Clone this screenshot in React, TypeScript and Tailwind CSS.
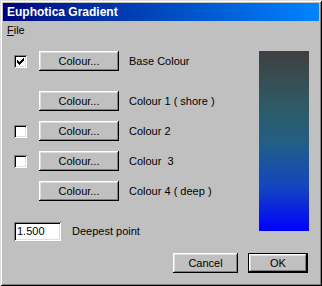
const raised =
  "shadow-[inset_-1px_-1px_#000,inset_1px_1px_#fff,inset_-2px_-2px_#808080,inset_2px_2px_#dfdfdf]";
const sunken =
  "shadow-[inset_1px_1px_#808080,inset_-1px_-1px_#fff,inset_2px_2px_#000,inset_-2px_-2px_#dfdfdf]";

// classic 7x7 check mark, one rect per pixel run
const checkRuns = [
  [6, 0, 1],
  [5, 1, 2],
  [0, 2, 1],
  [4, 2, 3],
  [0, 3, 2],
  [3, 3, 3],
  [0, 4, 5],
  [1, 5, 3],
  [2, 6, 1],
];

function Checkbox({ checked }: { checked?: boolean }) {
  return (
    <div className={`w-[13px] h-[13px] bg-white flex items-center justify-center ${sunken}`}>
      {checked && (
        <svg width="7" height="7" viewBox="0 0 7 7" shapeRendering="crispEdges">
          {checkRuns.map(([x, y, w], i) => (
            <rect key={i} x={x} y={y} width={w} height={1} fill="#000" />
          ))}
        </svg>
      )}
    </div>
  );
}

function Button({ label, w, isDefault }: { label: string; w: string; isDefault?: boolean }) {
  if (isDefault) {
    return (
      <button className={`${w} h-[20px] border border-black bg-[#c0c0c0] p-0`}>
        <div className={`w-full h-full flex items-center justify-center ${raised}`}>{label}</div>
      </button>
    );
  }
  return (
    <button className={`${w} h-[20px] bg-[#c0c0c0] flex items-center justify-center ${raised}`}>
      {label}
    </button>
  );
}

function ColourRow({
  label,
  box,
  checked,
  className = "",
}: {
  label: string;
  box?: boolean;
  checked?: boolean;
  className?: string;
}) {
  return (
    <div className={`flex items-center h-[20px] ${className}`}>
      <div className="w-[13px] mr-[12px]">{box && <Checkbox checked={checked} />}</div>
      <Button label="Colour..." w="w-[80px]" />
      <span className="ml-[10px] whitespace-pre">{label}</span>
    </div>
  );
}

export default function App() {
  return (
    <div
      className={`w-[322px] h-[286px] bg-[#c0c0c0] p-[3px] flex flex-col text-[11px] text-black font-['Liberation_Sans',Arial,sans-serif] shadow-[inset_1px_1px_#dfdfdf,inset_-1px_-1px_#000,inset_2px_2px_#fff,inset_-2px_-2px_#808080]`}
    >
      <div className="h-[18px] bg-linear-to-r from-[#000080] to-[#0084ff] flex items-center pl-[4px] text-white font-bold text-[12px]">
        Euphotica Gradient
      </div>
      <div className="h-[19px] flex items-center pl-[4px]">
        <span>
          <span className="underline underline-offset-1">F</span>ile
        </span>
      </div>

      <div className="flex pt-[11px] pl-[11px] pr-[10px]">
        <div className="flex-1 flex flex-col">
          <ColourRow label="Base Colour" box checked />
          <ColourRow label="Colour 1 ( shore )" className="mt-[20px]" />
          <ColourRow label="Colour 2" box className="mt-[10px]" />
          <ColourRow label="Colour  3" box className="mt-[10px]" />
          <ColourRow label="Colour 4 ( deep )" className="mt-[10px]" />
          <div className="flex items-center mt-[21px] h-[19px]">
            <div className={`w-[47px] h-[19px] bg-white flex items-center pl-[3px] ${sunken}`}>1.500</div>
            <span className="ml-[11px]">Deepest point</span>
          </div>
        </div>
        <div className="w-[50px] h-[180px] bg-[linear-gradient(to_bottom,#404040,#2d5c68_33%,#225e88_52%,#1444c0_76%,#0000ff)]" />
      </div>

      <div className="flex justify-end mt-[12px] pr-[11px] gap-[10px]">
        <Button label="Cancel" w="w-[65px]" />
        <Button label="OK" w="w-[60px]" isDefault />
      </div>
    </div>
  );
}
